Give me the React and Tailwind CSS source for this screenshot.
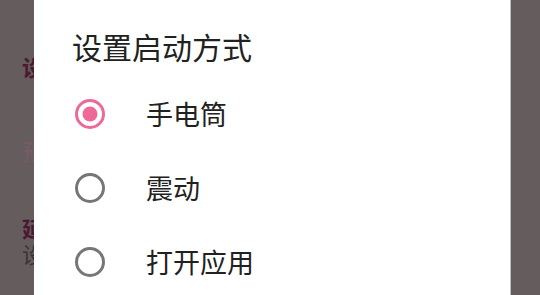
import React from 'react';

// 单选项
const RadioRow = ({ label, checked }) => (
  <div className="flex h-[74px] items-center">
    <svg width="32" height="32" viewBox="0 0 32 32" className="shrink-0">
      <circle cx="16" cy="16" r="13.5" fill="none" stroke={checked ? '#ee6898' : '#767676'} strokeWidth="3" />
      {checked && <circle cx="16" cy="16" r="7.5" fill="#ee6898" />}
    </svg>
    <span className="ml-[40px] text-[27px] leading-[30px] text-[#212121]">{label}</span>
  </div>
);

export default function App() {
  const options = [
    { label: '手电筒', checked: true },
    { label: '震动', checked: false },
    { label: '打开应用', checked: false },
  ];

  return (
    <div
      className="relative flex h-[295px] w-[540px] overflow-hidden bg-[#645c5d]"
      style={{ fontFamily: '"Noto Sans CJK SC", "Noto Sans", sans-serif' }}
    >
      {/* 背景中被遮罩的设置页（只露出左侧一截） */}
      <div className="flex w-[34px] shrink-0 flex-col overflow-hidden whitespace-nowrap pl-[22px] pt-[53px]">
        <span className="text-[22px] font-bold leading-[26px] text-[#4a1832]">设</span>
        <span className="mt-[58px] text-[22px] leading-[26px] text-[#7b5a69]">预</span>
        <span className="mt-[51px] text-[22px] font-bold leading-[26px] text-[#4a1832]">延</span>
        <span className="text-[22px] leading-[26px] text-[#3a3334]">设</span>
      </div>

      {/* 对话框 */}
      <div className="w-[477px] shrink-0 border-r border-[#bdbdbd] bg-white pl-[40px] pt-[31px]">
        <h2 className="-ml-[2px] text-[30px] font-normal leading-[30px] text-[#212121]">设置启动方式</h2>
        <div className="mt-[16px] flex flex-col">
          {options.map((o) => (
            <RadioRow key={o.label} label={o.label} checked={o.checked} />
          ))}
        </div>
      </div>
    </div>
  );
}
